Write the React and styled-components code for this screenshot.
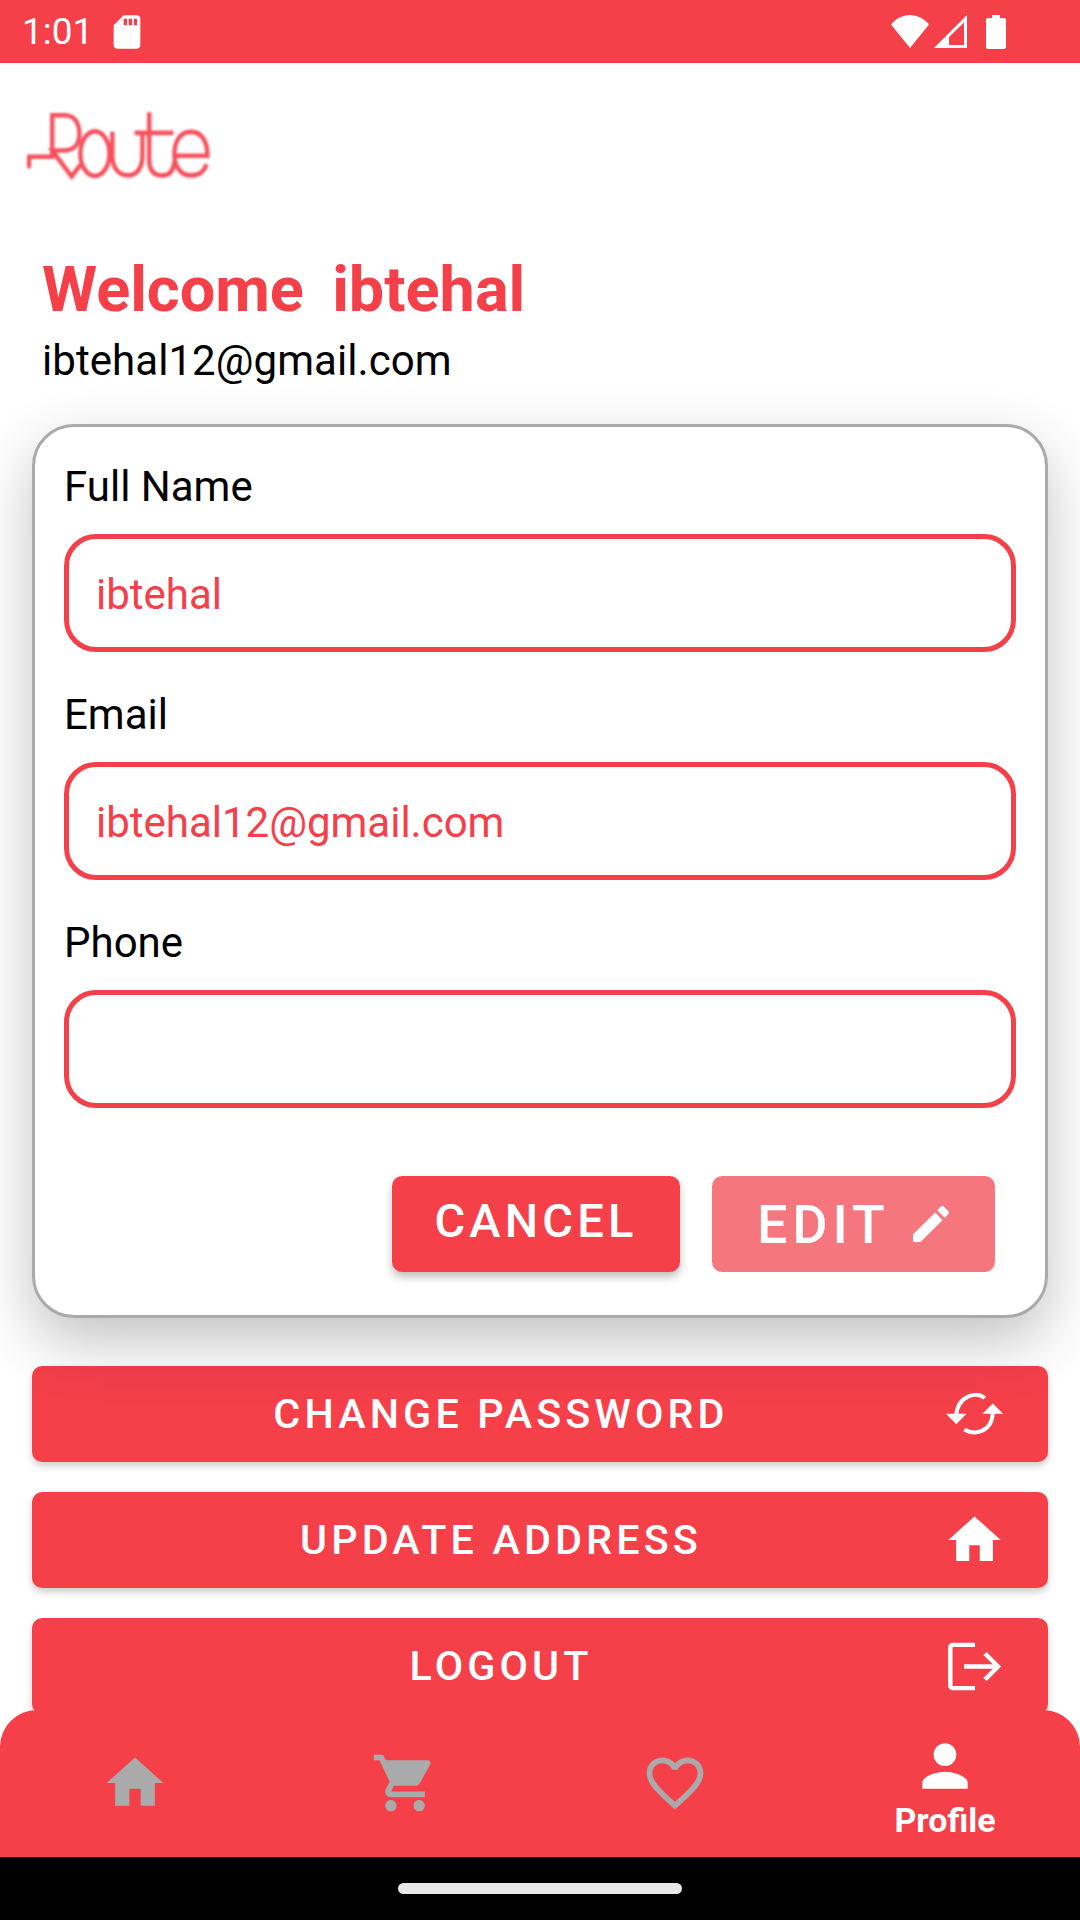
import React from 'react';
import styled, { createGlobalStyle } from 'styled-components';
import { MdHome, MdShoppingCart, MdFavoriteBorder, MdPerson, MdEdit, MdSdCard } from 'react-icons/md';

const RED = '#f5404a';

const Global = createGlobalStyle`
  html, body { margin: 0; padding: 0; background: #fff; }
  * { box-sizing: border-box; }
  body { font-family: Roboto, "Liberation Sans", sans-serif; }
`;

const Screen = styled.div`
  width: 1080px;
  height: 1920px;
  display: flex;
  flex-direction: column;
  overflow: hidden;
  background: #fff;
`;

const StatusBar = styled.div`
  height: 63px;
  flex: none;
  background: ${RED};
  color: #fff;
  display: flex;
  align-items: center;
  padding: 0 74px 0 22px;
`;
const Clock = styled.span`
  font-size: 37px;
  line-height: 63px;
  width: 85px;
`;
const StatusRight = styled.div`
  margin-left: auto;
  display: flex;
  align-items: center;
`;

const Scroll = styled.main`
  flex: 1;
  min-height: 0;
  display: flex;
  flex-direction: column;
`;

const LogoBox = styled.div`
  flex: none;
  height: 145px;
  margin-top: 45px;
  padding-left: 27px;
`;
const Logo = styled.svg`
  display: block;
  filter: blur(1px);
`;

const Welcome = styled.h1`
  flex: none;
  margin: 0;
  padding-left: 42px;
  font-size: 63px;
  line-height: 74px;
  font-weight: 700;
  color: ${RED};
  white-space: pre;
  word-spacing: -1.5px;
`;
const Address = styled.div`
  flex: none;
  padding-left: 42px;
  font-size: 42px;
  line-height: 66px;
  margin-top: 1px;
  color: #000;
  letter-spacing: 0.06px;
`;

const Card = styled.section`
  position: relative;
  z-index: 1;
  flex: none;
  margin: 30px 32px 0;
  height: 894px;
  background: #fff;
  border: 3px solid #aaa;
  border-radius: 42px;
  padding: 30px 29px 0;
  box-shadow: 0 24px 60px rgba(0, 0, 0, 0.24);
`;
const FieldLabel = styled.label`
  display: block;
  font-size: 42px;
  line-height: 60px;
  color: #000;
  margin-bottom: 17px;
`;
const Field = styled.div`
  height: 118px;
  border: 5px solid ${RED};
  border-radius: 32px;
  padding: 2px 27px 0;
  display: flex;
  align-items: center;
  font-size: 42px;
  color: ${RED};
  margin-bottom: 33px;
`;
const Actions = styled.div`
  display: flex;
  justify-content: flex-end;
  gap: 32px;
  margin-top: 68px;
  padding-right: 21px;
`;
const ActionButton = styled.button`
  border: 0;
  height: 96px;
  border-radius: 10px;
  font-family: inherit;
  font-weight: 500;
  color: #fff;
  display: flex;
  align-items: center;
  letter-spacing: 0.09em;
`;
const CancelButton = styled(ActionButton)`
  width: 288px;
  justify-content: center;
  padding: 0 0 8px;
  background: ${RED};
  font-size: 47px;
  box-shadow: 0 5px 8px rgba(0, 0, 0, 0.25);
`;
const EditButton = styled(ActionButton)`
  width: 283px;
  padding: 0 0 0 45px;
  background: #f6767d;
  font-size: 54px;
  gap: 17px;
`;

const Menu = styled.div`
  flex: none;
  display: flex;
  flex-direction: column;
  gap: 30px;
  margin: 48px 32px 0;
`;
const MenuButton = styled.button`
  position: relative;
  flex: none;
  height: 96px;
  border: 0;
  border-radius: 10px;
  background: ${RED};
  color: #fff;
  font-family: inherit;
  font-size: 41.3px;
  font-weight: 500;
  letter-spacing: 0.1em;
  display: flex;
  align-items: center;
  justify-content: center;
  padding: 0 78px 0 0;
  box-shadow: 0 4px 7px rgba(0, 0, 0, 0.2);
`;
const MenuIcon = styled.span`
  position: absolute;
  right: 42px;
  top: 50%;
  transform: translateY(-50%);
  width: 63px;
  height: 63px;
  display: flex;
  align-items: center;
  justify-content: center;
`;

const BottomNav = styled.nav`
  position: relative;
  z-index: 2;
  flex: none;
  height: 147px;
  background: ${RED};
  border-radius: 37px 37px 0 0;
  display: grid;
  grid-template-columns: repeat(4, 1fr);
`;
const NavItem = styled.div`
  display: flex;
  flex-direction: column;
  align-items: center;
  justify-content: center;
  color: ${(p) => (p.$active ? '#fff' : '#aaa')};
  padding: ${(p) => (p.$active ? '4px 0 0' : '0 0 2px')};
`;
const NavLabel = styled.span`
  font-size: 34px;
  font-weight: 700;
  line-height: 38px;
  margin-top: 1px;
  color: #fff;
`;

const SystemBar = styled.div`
  height: 63px;
  flex: none;
  background: #000;
  display: flex;
  justify-content: center;
  padding-top: 26px;
`;
const HomePill = styled.div`
  width: 284px;
  height: 11px;
  border-radius: 6px;
  background: #e8e8e8;
`;

const LogoMark = () => (
  <Logo width="194" height="83" viewBox="0 0 200 80" preserveAspectRatio="none" fill="none" stroke="#f6505c" strokeWidth="4.5">
    <path d="M2 58V47H26V7H39C50 7 54 16 54 25C54 35 48 41 38 41H26L46 66L55 55" />
    <ellipse cx="70" cy="44" rx="15" ry="21.5" />
    <path d="M88 23V46C88 58 95 65 104 65C113 65 119 58 119 46V23" />
    <path d="M126 4V50C126 60 131 65 140 65C147 65 151 60 152 51" />
    <path d="M111 24H151" />
    <path d="M152 46H186C186 32 180 23 169 23C158 23 152 32 152 44C152 56 158 65 169 65C177 65 183 61 185 54" />
  </Logo>
);

const WifiIcon = () => (
  <svg width="38" height="33" viewBox="0 0 38 33" style={{ marginRight: 5 }}>
    <path d="M0 9.5C5 3.500 12 0 19 0C26 0 33 3.500 38 9.500L19 33Z" fill="#fff" />
  </svg>
);
const SignalIcon = () => (
  <svg width="33" height="33" viewBox="0 0 33 33" style={{ marginRight: 19 }}>
    <path fillRule="evenodd" d="M33 0V33H0ZM30 7.500L15 22V30H30Z" fill="#fff" />
  </svg>
);
const BatteryIcon = () => (
  <svg width="20" height="34" viewBox="0 0 20 34">
    <path d="M6 0H14V3H18C19.200 3 20 3.800 20 5V32C20 33.200 19.200 34 18 34H2C.8 34 0 33.200 0 32V5C0 3.800 .8 3 2 3H6Z" fill="#fff" />
  </svg>
);
const SyncIcon = () => (
  <svg width="57" height="43" viewBox="198 97 172 128" fill="none" stroke="#fff" strokeWidth="12">
    <path d="M315 113C303 103 285 100 266 108C243 118 231 136 229 165" />
    <path d="M339 155C339 182 328 202 306 212C289 219 270 218 253 208" />
    <path d="M198 160H260L229 192Z" fill="#fff" stroke="none" />
    <path d="M308 160H370L339 129Z" fill="#fff" stroke="none" />
  </svg>
);
const LogoutIcon = () => (
  <svg width="54" height="48" viewBox="0 0 54 48" fill="none" stroke="#fff" strokeWidth="4.500">
    <path d="M27 2.300H5C3.500 2.300 2.300 3.500 2.300 5V43C2.300 44.500 3.500 45.700 5 45.700H27" />
    <path d="M16 24H50" />
    <path d="M37 11L50 24L37 37" />
  </svg>
);

const App = () => (
  <Screen>
    <Global />
    <StatusBar>
      <Clock>1:01</Clock>
      <MdSdCard size={40} color="#fff" />
      <StatusRight>
        <WifiIcon />
        <SignalIcon />
        <BatteryIcon />
      </StatusRight>
    </StatusBar>
    <Scroll>
      <LogoBox><LogoMark /></LogoBox>
      <Welcome>Welcome  ibtehal</Welcome>
      <Address>ibtehal12@gmail.com</Address>
      <Card>
        <FieldLabel>Full Name</FieldLabel>
        <Field>ibtehal</Field>
        <FieldLabel>Email</FieldLabel>
        <Field>ibtehal12@gmail.com</Field>
        <FieldLabel>Phone</FieldLabel>
        <Field />
        <Actions>
          <CancelButton>CANCEL</CancelButton>
          <EditButton>EDIT <MdEdit size={48} /></EditButton>
        </Actions>
      </Card>
      <Menu>
        <MenuButton>CHANGE PASSWORD<MenuIcon><SyncIcon /></MenuIcon></MenuButton>
        <MenuButton>UPDATE ADDRESS<MenuIcon><MdHome size={63} /></MenuIcon></MenuButton>
        <MenuButton>LOGOUT<MenuIcon><LogoutIcon /></MenuIcon></MenuButton>
      </Menu>
    </Scroll>
    <BottomNav>
      <NavItem><MdHome size={68} /></NavItem>
      <NavItem><MdShoppingCart size={68} /></NavItem>
      <NavItem><MdFavoriteBorder size={68} /></NavItem>
      <NavItem $active><MdPerson size={68} /><NavLabel>Profile</NavLabel></NavItem>
    </BottomNav>
    <SystemBar><HomePill /></SystemBar>
  </Screen>
);

export default App;
